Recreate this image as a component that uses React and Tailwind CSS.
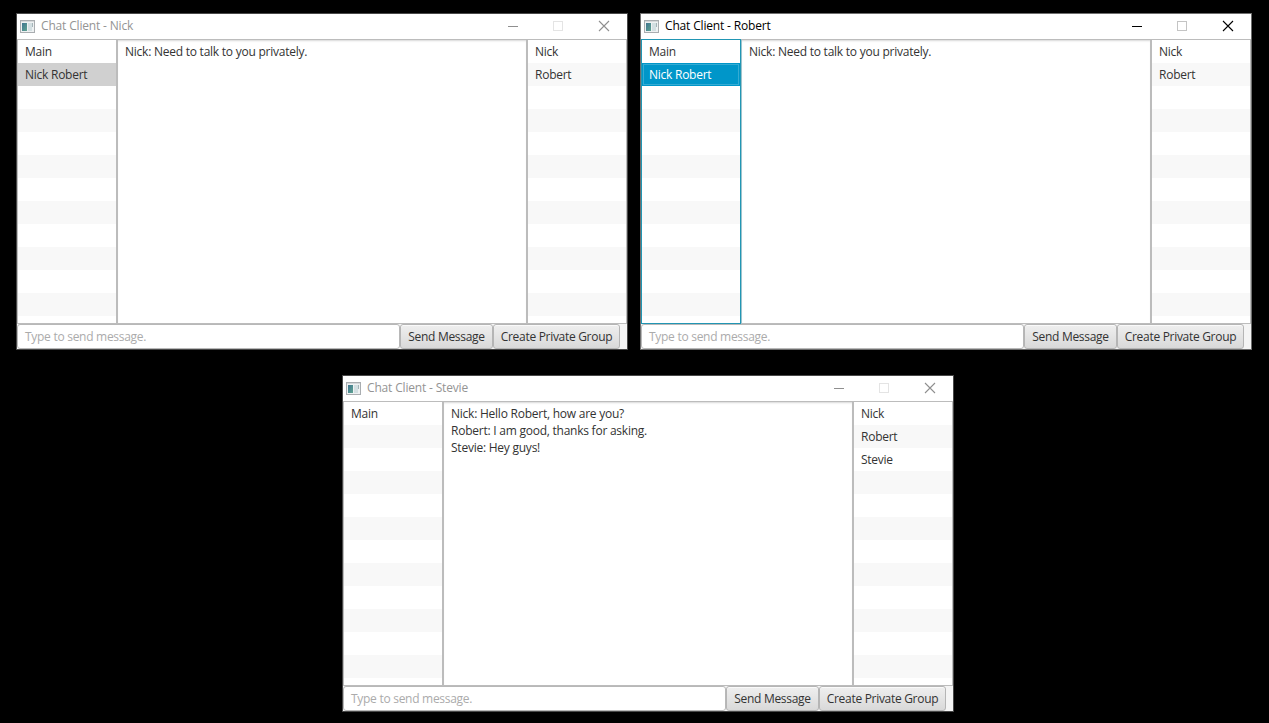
const ROWS = Array.from({ length: 13 }, (_, i) => i);

function AppIcon() {
  return (
    <svg width="15" height="13" viewBox="0 0 15 13" className="-mt-px shrink-0" shapeRendering="crispEdges">
      <defs>
        <linearGradient id="pane" x1="0" y1="0" x2="1" y2="1">
          <stop offset="0" stopColor="#3f7590" />
          <stop offset="1" stopColor="#5fa391" />
        </linearGradient>
      </defs>
      <rect x="0.5" y="0.5" width="14" height="12" fill="#eef1f2" stroke="#a9adb0" />
      <rect x="1" y="1" width="13" height="1" fill="#d5d8da" />
      <rect x="2" y="3" width="5" height="8" fill="url(#pane)" />
      <rect x="8" y="3" width="4" height="8" fill="#d3dfe2" />
      <rect x="12" y="3" width="1" height="4" fill="#a4b4b8" />
    </svg>
  );
}

function Controls({ active }) {
  const stroke = active ? "#000000" : "#8f8f8f";
  return (
    <svg width="102" height="12" viewBox="0 0 102 12" fill="none" className="-mt-px mr-[17px] shrink-0">
      <path d="M0 6.5h10" stroke={stroke} />
      <rect x="45.5" y="1.5" width="9" height="9" stroke={active ? "#c4c4c4" : "#e4e4e4"} />
      <path d="M91 1l10 10M101 1l-10 10" stroke={stroke} strokeWidth="1.1" />
    </svg>
  );
}

function List({ items, selected, focused }) {
  return (
    <ul className={`h-full w-[100px] shrink-0 overflow-hidden border bg-white ${focused ? "border-[#2196b4]" : "border-[#bcbcbc]"}`}>
      {ROWS.map((i) => {
        const tone =
          i === selected
            ? focused
              ? "bg-[#0096c9] text-white outline outline-1 -outline-offset-2 outline-[#35abd3]"
              : "bg-[#d0d0d0] text-[#333333]"
            : i % 2
              ? "bg-[#f8f8f8] text-[#333333]"
              : "bg-white text-[#333333]";
        return (
          <li key={i} className={`h-[23px] pl-[7px] leading-[24px] tracking-[-0.25px] ${tone}`}>
            {items[i]}
          </li>
        );
      })}
    </ul>
  );
}

function Button({ children, width }) {
  return (
    <button
      className={`h-[25px] shrink-0 whitespace-nowrap rounded-[3px] border border-[#b5b5b5] bg-linear-to-b from-[#efefef] to-[#d9d9d9] text-center leading-[24px] tracking-[-0.3px] text-[#333333] shadow-[inset_0_1px_0_#fafafa] ${width}`}
    >
      {children}
    </button>
  );
}

function ChatWindow({ name, active, groups, selected, messages, users, place }) {
  return (
    <section
      className={`absolute flex h-[335px] w-[610px] flex-col bg-[#f4f4f4] ring-1 ${active ? "ring-[#6e6e6e]" : "ring-[#484848]"} ${place}`}
    >
      <header className="flex h-[25px] shrink-0 items-center bg-white pl-[3px]">
        <AppIcon />
        <h1 className={`-mt-px ml-[6px] flex-1 tracking-[-0.17px] ${active ? "text-black" : "text-[#949494]"}`}>
          Chat Client - {name}
        </h1>
        <Controls active={active} />
      </header>
      <div className="flex h-[285px] shrink-0">
        <List items={groups} selected={selected} focused={active} />
        <div
          className={`h-full flex-1 border border-[#bcbcbc] bg-white pl-[7px] pt-[3px] leading-[17px] tracking-[-0.24px] text-[#333333] shadow-[inset_0_2px_2px_-1px_#d8d8d8] ${active ? "border-l-[#9fc3cc]" : ""}`}
        >
          {messages.map((m) => (
            <p key={m}>{m}</p>
          ))}
        </div>
        <List items={users} />
      </div>
      <footer className="flex h-[25px] shrink-0">
        <div className="h-[25px] w-[383px] rounded-[3px] border border-[#b8b8b8] bg-white pl-[7px] leading-[24px] tracking-[-0.28px] text-[#ababab]">
          Type to send message.
        </div>
        <Button width="w-[93px]">Send Message</Button>
        <Button width="w-[127px]">Create Private Group</Button>
      </footer>
    </section>
  );
}

export default function App() {
  return (
    <main className="relative h-[723px] w-[1269px] overflow-hidden bg-black font-['Open_Sans','Noto_Sans',sans-serif] text-[12px] tracking-[-0.2px]">
      <ChatWindow
        name="Nick"
        place="left-[17px] top-[14px]"
        groups={["Main", "Nick Robert"]}
        selected={1}
        messages={["Nick: Need to talk to you privately."]}
        users={["Nick", "Robert"]}
      />
      <ChatWindow
        name="Robert"
        active
        place="left-[641px] top-[14px]"
        groups={["Main", "Nick Robert"]}
        selected={1}
        messages={["Nick: Need to talk to you privately."]}
        users={["Nick", "Robert"]}
      />
      <ChatWindow
        name="Stevie"
        place="left-[343px] top-[376px]"
        groups={["Main"]}
        messages={["Nick: Hello Robert, how are you?", "Robert: I am good, thanks for asking.", "Stevie: Hey guys!"]}
        users={["Nick", "Robert", "Stevie"]}
      />
    </main>
  );
}
